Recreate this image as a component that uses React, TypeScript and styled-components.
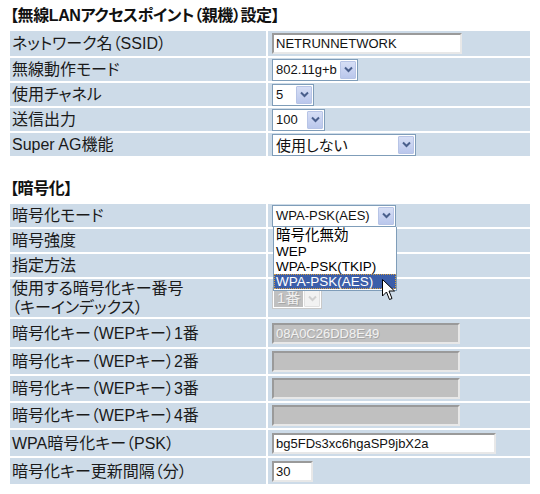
import React from 'react';
import styled, { createGlobalStyle, css } from 'styled-components';

const GlobalStyle = createGlobalStyle`
  body {
    margin: 0;
    background: #ffffff;
    font-family: "Liberation Sans", "Noto Sans CJK JP", sans-serif;
    color: #1a1a1a;
  }
`;

// Latin glyphs from Liberation Sans, Japanese from Noto Sans CJK JP
const FONT = `"Liberation Sans", "Noto Sans CJK JP", sans-serif`;

const Page = styled.div`
  width: 540px;
  height: 494px;
  padding-left: 10px;
  box-sizing: border-box;
  overflow: hidden;
  position: relative;
`;

const SectionTitle = styled.div<{ $top: number }>`
  margin-top: ${(p) => p.$top}px;
  margin-bottom: 4px;
  height: 22px;
  line-height: 22px;
  font-family: ${FONT};
  font-size: 16px;
  font-weight: bold;
  font-feature-settings: 'palt';
  letter-spacing: -0.4px;
  color: #111;
`;

const FormGrid = styled.div`
  display: grid;
  grid-template-columns: 256px 262px;
  gap: 2px;
`;

const Cell = styled.div<{ $h: number }>`
  background: #cddbe8;
  height: ${(p) => p.$h}px;
  display: flex;
  align-items: center;
  box-sizing: border-box;
`;

const LabelCell = styled(Cell)`
  padding-left: 2px;
  font-family: ${FONT};
  font-size: 16px;
  font-feature-settings: 'palt';
  line-height: 19px;
  color: #1a1a1a;
`;

const ValueCell = styled(Cell)`
  padding-left: 4px;
  position: relative;
`;

const TextBox = styled.div<{ $w: number; $disabled?: boolean }>`
  width: ${(p) => p.$w}px;
  height: 21px;
  box-sizing: border-box;
  border-style: solid;
  border-width: 2px;
  border-color: #9a9a9a #e8e8e8 #e8e8e8 #9a9a9a;
  background: #ffffff;
  font-family: ${FONT};
  font-size: 13px;
  line-height: 17px;
  padding-left: 2px;
  color: #111;
  white-space: nowrap;
  overflow: hidden;
  ${(p) =>
    p.$disabled &&
    css`
      background: #c0c0c0;
      color: #f2f2f2;
      text-shadow: 1px 1px 0 #a6a6a6;
    `}
`;

const SelectBox = styled.div<{ $w: number; $disabled?: boolean }>`
  width: ${(p) => p.$w}px;
  height: 22px;
  box-sizing: border-box;
  border: 1px solid ${(p) => (p.$disabled ? '#c9c9c9' : '#7f9db9')};
  background: #ffffff;
  display: flex;
  align-items: center;
  justify-content: space-between;
  padding: 1px;
`;

const SelectText = styled.span<{ $jp?: boolean; $disabled?: boolean }>`
  font-family: ${FONT};
  font-size: ${(p) => (p.$jp ? 15 : 13)}px;
  font-feature-settings: 'palt';
  padding-left: 2px;
  white-space: nowrap;
  color: #111;
  ${(p) =>
    p.$disabled &&
    css`
      background: #c0c0c0;
      color: #f0f0f0;
      height: 18px;
      line-height: 18px;
      padding: 0 3px;
      text-shadow: 1px 1px 0 #a6a6a6;
    `}
`;

const ArrowButton = styled.span<{ $disabled?: boolean }>`
  width: 16px;
  height: 18px;
  flex: none;
  display: flex;
  align-items: center;
  justify-content: center;
  border-radius: 1px;
  background: ${(p) =>
    p.$disabled ? '#f2f2f2' : 'linear-gradient(#d6def5, #bac7ec)'};
  border: 1px solid ${(p) => (p.$disabled ? '#e0e0e0' : '#b7c4e6')};
  box-sizing: border-box;
`;

const DropList = styled.div`
  position: absolute;
  left: 5px;
  top: 23px;
  width: 124px;
  background: #ffffff;
  border: 1px solid #7f9db9;
  border-top: none;
  box-sizing: border-box;
  z-index: 5;
  padding-bottom: 1px;
`;

const DropItem = styled.div<{ $jp?: boolean; $active?: boolean }>`
  height: ${(p) => (p.$jp ? 17 : 15)}px;
  line-height: ${(p) => (p.$jp ? 17 : 15)}px;
  padding-left: 2px;
  font-family: ${FONT};
  font-size: ${(p) => (p.$jp ? 14.5 : 13.5)}px;
  font-feature-settings: 'palt';
  color: #000;
  white-space: nowrap;
  box-sizing: border-box;
  ${(p) =>
    p.$active &&
    css`
      background: #3c5ea9;
      color: #ffffff;
      outline: 1px dotted #d8a040;
      outline-offset: -1px;
    `}
`;

const Cursor = styled.svg`
  position: absolute;
  left: 114px;
  top: 75px;
  z-index: 6;
`;

const Chevron: React.FC<{ disabled?: boolean }> = ({ disabled }) => (
  <svg width="9" height="7" viewBox="0 0 9 7">
    <path
      d="M1 1.5 L4.5 5 L8 1.5"
      fill="none"
      stroke={disabled ? '#d0d0d0' : '#4a5f8c'}
      strokeWidth="2"
    />
  </svg>
);

interface SelectProps {
  value: string;
  width: number;
  jp?: boolean;
  disabled?: boolean;
}

const Select: React.FC<SelectProps> = ({ value, width, jp, disabled }) => (
  <SelectBox $w={width} $disabled={disabled}>
    <SelectText $jp={jp} $disabled={disabled}>
      {value}
    </SelectText>
    <ArrowButton $disabled={disabled}>
      <Chevron disabled={disabled} />
    </ArrowButton>
  </SelectBox>
);

interface Row {
  label: React.ReactNode;
  h: number;
  value?: React.ReactNode;
}

const FormTable: React.FC<{ rows: Row[] }> = ({ rows }) => (
  <FormGrid>
    {rows.map((row, i) => (
      <React.Fragment key={i}>
        <LabelCell $h={row.h}>{row.label}</LabelCell>
        <ValueCell $h={row.h}>{row.value}</ValueCell>
      </React.Fragment>
    ))}
  </FormGrid>
);

const apRows: Row[] = [
  { label: 'ネットワーク名（SSID）', h: 25, value: <TextBox $w={190}>NETRUNNETWORK</TextBox> },
  { label: '無線動作モード', h: 23, value: <Select value="802.11g+b" width={86} /> },
  { label: '使用チャネル', h: 23, value: <Select value="5" width={42} /> },
  { label: '送信出力', h: 23, value: <Select value="100" width={53} /> },
  { label: 'Super AG機能', h: 23, value: <Select value="使用しない" width={144} jp /> },
];

const modeCell = (
  <>
    <Select value="WPA-PSK(AES)" width={124} />
    <DropList>
      <DropItem $jp>暗号化無効</DropItem>
      <DropItem>WEP</DropItem>
      <DropItem>WPA-PSK(TKIP)</DropItem>
      <DropItem $active>WPA-PSK(AES)</DropItem>
    </DropList>
    <Cursor width="13" height="22" viewBox="0 0 13 22">
      <path
        d="M0.5 0.5 L0.5 17 L4.5 13 L7.5 20.5 L10 19.5 L7 12 L12.5 12 Z"
        fill="#ffffff"
        stroke="#000000"
        strokeWidth="1"
      />
    </Cursor>
  </>
);

const encRows: Row[] = [
  { label: '暗号化モード', h: 23, value: modeCell },
  { label: '暗号強度', h: 23 },
  { label: '指定方法', h: 23 },
  {
    label: (
      <span>
        使用する暗号化キー番号
        <br />
        （キーインデックス）
      </span>
    ),
    h: 38,
    value: <Select value="1番" width={50} jp disabled />,
  },
  { label: '暗号化キー（WEPキー）1番', h: 28, value: <TextBox $w={188} $disabled>08A0C26DD8E49</TextBox> },
  { label: '暗号化キー（WEPキー）2番', h: 25, value: <TextBox $w={188} $disabled /> },
  { label: '暗号化キー（WEPキー）3番', h: 25, value: <TextBox $w={188} $disabled /> },
  { label: '暗号化キー（WEPキー）4番', h: 25, value: <TextBox $w={188} $disabled /> },
  { label: 'WPA暗号化キー（PSK）', h: 26, value: <TextBox $w={224}>bg5FDs3xc6hgaSP9jbX2a</TextBox> },
  { label: '暗号化キー更新間隔（分）', h: 26, value: <TextBox $w={41}>30</TextBox> },
];

const App: React.FC = () => (
  <>
    <GlobalStyle />
    <Page>
      <SectionTitle $top={5}>【無線LANアクセスポイント（親機）設定】</SectionTitle>
      <FormTable rows={apRows} />
      <SectionTitle $top={22}>【暗号化】</SectionTitle>
      <FormTable rows={encRows} />
    </Page>
  </>
);

export default App;
